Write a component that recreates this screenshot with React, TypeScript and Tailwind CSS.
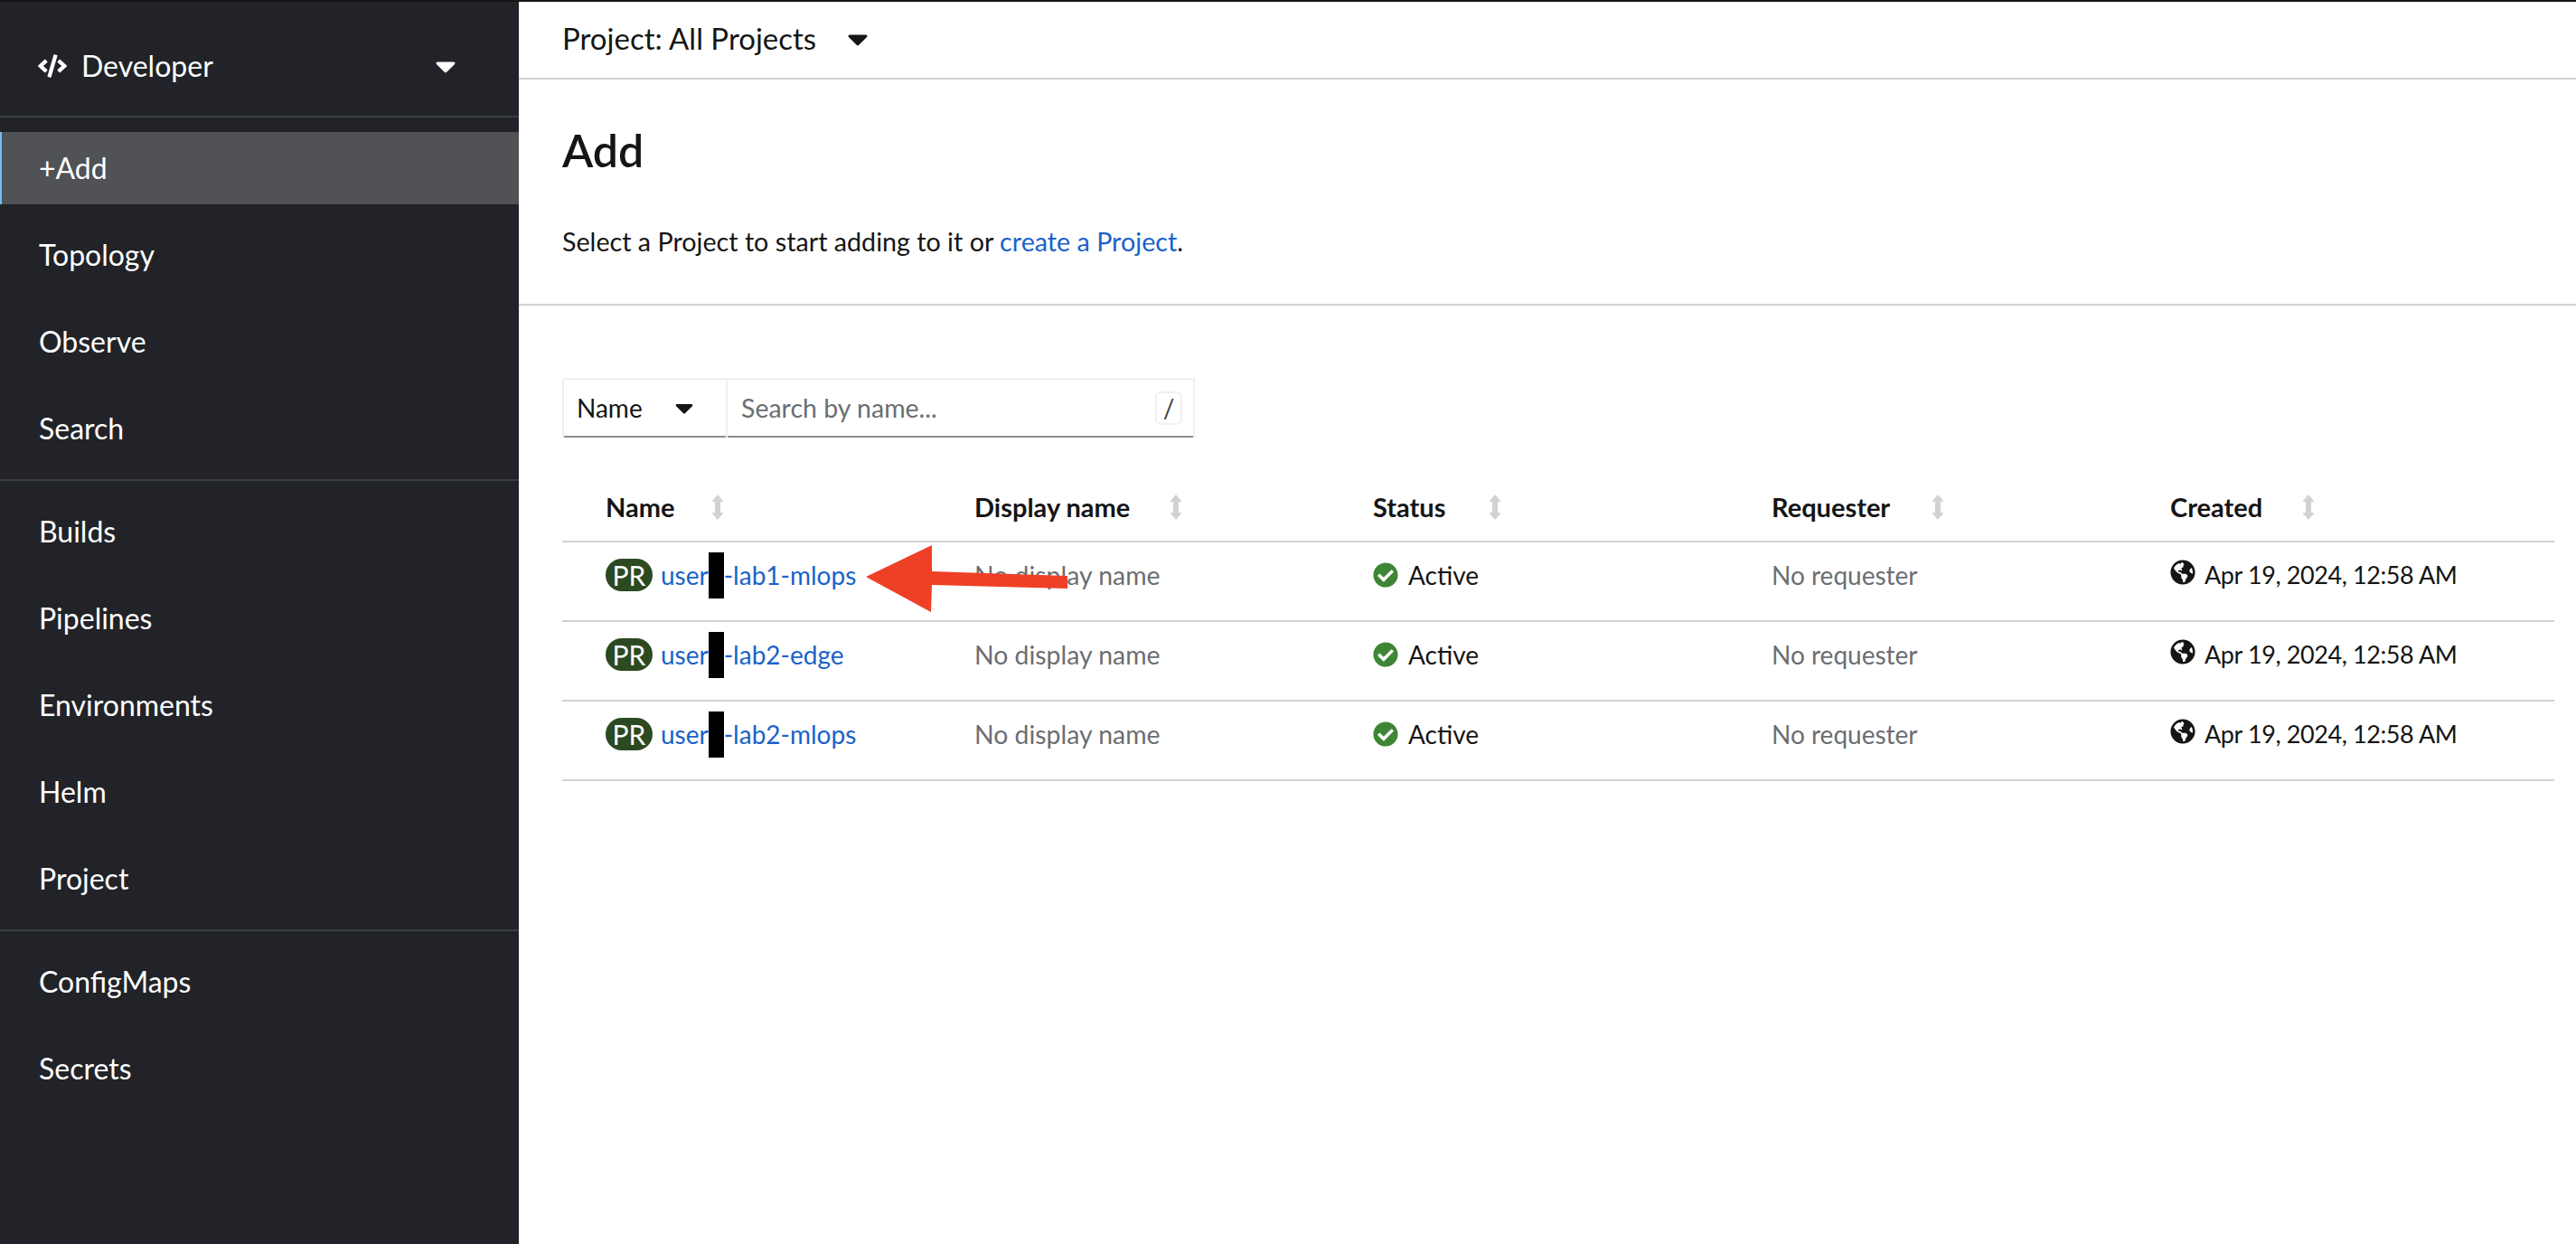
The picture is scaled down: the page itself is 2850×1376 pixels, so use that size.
import { FaCaretDown, FaCheckCircle, FaCode, FaGlobeAmericas } from "react-icons/fa";

const NAV_GROUPS = [
  ["+Add", "Topology", "Observe", "Search"],
  ["Builds", "Pipelines", "Environments", "Helm", "Project"],
  ["ConfigMaps", "Secrets"],
];

const COLUMNS = [
  { label: "Name", gap: "ml-[41px]" },
  { label: "Display name", gap: "ml-[44px]" },
  { label: "Status", gap: "ml-[48px]" },
  { label: "Requester", gap: "ml-[46px]" },
  { label: "Created", gap: "ml-[44px]" },
];

const PROJECTS = ["-lab1-mlops", "-lab2-edge", "-lab2-mlops"];

function SortIcon() {
  return (
    <svg viewBox="0 0 14 28" className="h-[28px] w-[14px] shrink-0 fill-[#d2d2d2]">
      <path d="M7 0 L13 7 Q13.5 8 12 8 L10 8 L10 20 L12 20 Q13.5 20 13 21 L7 28 L1 21 Q0.5 20 2 20 L4 20 L4 8 L2 8 Q0.5 8 1 7 Z" />
    </svg>
  );
}

function Sidebar() {
  return (
    <aside className="flex w-[574px] shrink-0 flex-col bg-[#212328] text-[32px] text-white">
      <div className="flex h-[126px] items-center pl-[42px] pr-[63px] pt-[16px]">
        <FaCode className="h-[32px] w-[32px] shrink-0" />
        <span className="ml-[16px] flex-1">Developer</span>
        <FaCaretDown className="h-[36px] w-[36px]" />
      </div>
      {NAV_GROUPS.map((group) => (
        <nav key={group[0]} className="flex flex-col gap-[16px] border-t-2 border-[#3c3f42] py-[16px]">
          {group.map((item) => (
            <div
              key={item}
              className={
                item === "+Add"
                  ? "flex h-[80px] items-center border-l-2 border-[#73bcf7] bg-[#515256] pl-[41px]"
                  : "flex h-[80px] items-center pl-[43px]"
              }
            >
              {item}
            </div>
          ))}
        </nav>
      ))}
    </aside>
  );
}

function Toolbar() {
  return (
    <div className="ml-[48px] mt-[80px] flex h-[66px] w-[700px] border-2 border-b-0 border-[#f0f0f0] shadow-[inset_0_-2px_0_#8a8d90]">
      <div className="flex w-[181px] items-center border-r-2 border-[#f0f0f0] pb-[2px] pl-[14px]">
        <span>Name</span>
        <FaCaretDown className="ml-[30px] h-[32px] w-[32px] text-[#151515]" />
      </div>
      <div className="flex flex-1 items-center pb-[2px] pl-[15px] pr-[12px]">
        <span className="flex-1 text-[28.5px] text-[#6a6e73]">Search by name...</span>
        <span className="flex h-[37px] w-[30px] items-center justify-center rounded-[6px] border-2 border-[#f0f0f0] text-[#3c3f42]">/</span>
      </div>
    </div>
  );
}

function ProjectTable() {
  return (
    <div className="ml-[48px] mr-[24px]">
      <div className="grid h-[116px] grid-cols-[408px_441px_441px_441px_1fr] items-center border-b-2 border-[#d2d2d2] px-[48px] pt-[40px] text-[29px] font-bold">
        {COLUMNS.map((col) => (
          <div key={col.label} className="flex items-center">
            <span>{col.label}</span>
            <span className={col.gap}>
              <SortIcon />
            </span>
          </div>
        ))}
      </div>
      {PROJECTS.map((suffix) => (
        <div
          key={suffix}
          className="grid h-[88px] grid-cols-[408px_441px_441px_441px_1fr] items-center border-b-2 border-[#d2d2d2] px-[48px] pb-[14px]"
        >
          <div className="flex items-center">
            <span className="flex h-[36px] w-[52px] items-center justify-center rounded-full bg-[#2c4a22] text-[30px] text-white">PR</span>
            <span className="ml-[9px] text-[#1a62c8]">user</span>
            <span className="h-[51px] w-[17px] bg-black" />
            <span className="text-[#1a62c8]">{suffix}</span>
          </div>
          <div className="text-[28.4px] text-[#6a6e73]">No display name</div>
          <div className="flex items-center">
            <FaCheckCircle className="h-[28px] w-[28px] text-[#3e8635]" />
            <span className="ml-[11px]">Active</span>
          </div>
          <div className="text-[#6a6e73]">No requester</div>
          <div className="flex items-center">
            <FaGlobeAmericas className="mb-[6px] h-[28px] w-[28px] text-[#151515]" />
            <span className="ml-[10px] text-[27px] tracking-[-0.4px]">Apr 19, 2024, 12:58 AM</span>
          </div>
        </div>
      ))}
    </div>
  );
}

export default function App() {
  return (
    <div className="flex h-[1376px] w-[2850px] flex-col overflow-hidden bg-white font-['Lato',sans-serif] text-[28px] text-[#151515]">
      <div className="h-[2px] bg-[#151515]" />
      <div className="relative flex min-h-0 flex-1">
        <Sidebar />
        <main className="min-w-0 flex-1">
          <div className="flex h-[86px] items-center border-b-2 border-[#d2d2d2] pb-[2px] pl-[48px] text-[33px]">
            <span>Project: All Projects</span>
            <FaCaretDown className="ml-[28px] h-[36px] w-[36px]" />
          </div>
          <section className="h-[250px] border-b-2 border-[#d2d2d2] pl-[48px] pt-[45px]">
            <h1 className="text-[50px] font-semibold leading-[66px]">Add</h1>
            <p className="mt-[46px] text-[28.7px] leading-[44px]">
              Select a Project to start adding to it or <span className="text-[#1a62c8]">create a Project</span>.
            </p>
          </section>
          <Toolbar />
          <ProjectTable />
        </main>
        {/* annotation arrow pasted over the screenshot */}
        <svg viewBox="0 0 230 78" className="absolute left-[954px] top-[599px] h-[78px] w-[230px] fill-[#ee4026]">
          <polygon points="4,37 77,2 77,31 227,36 227,50 77,46 76,76" />
        </svg>
      </div>
    </div>
  );
}
